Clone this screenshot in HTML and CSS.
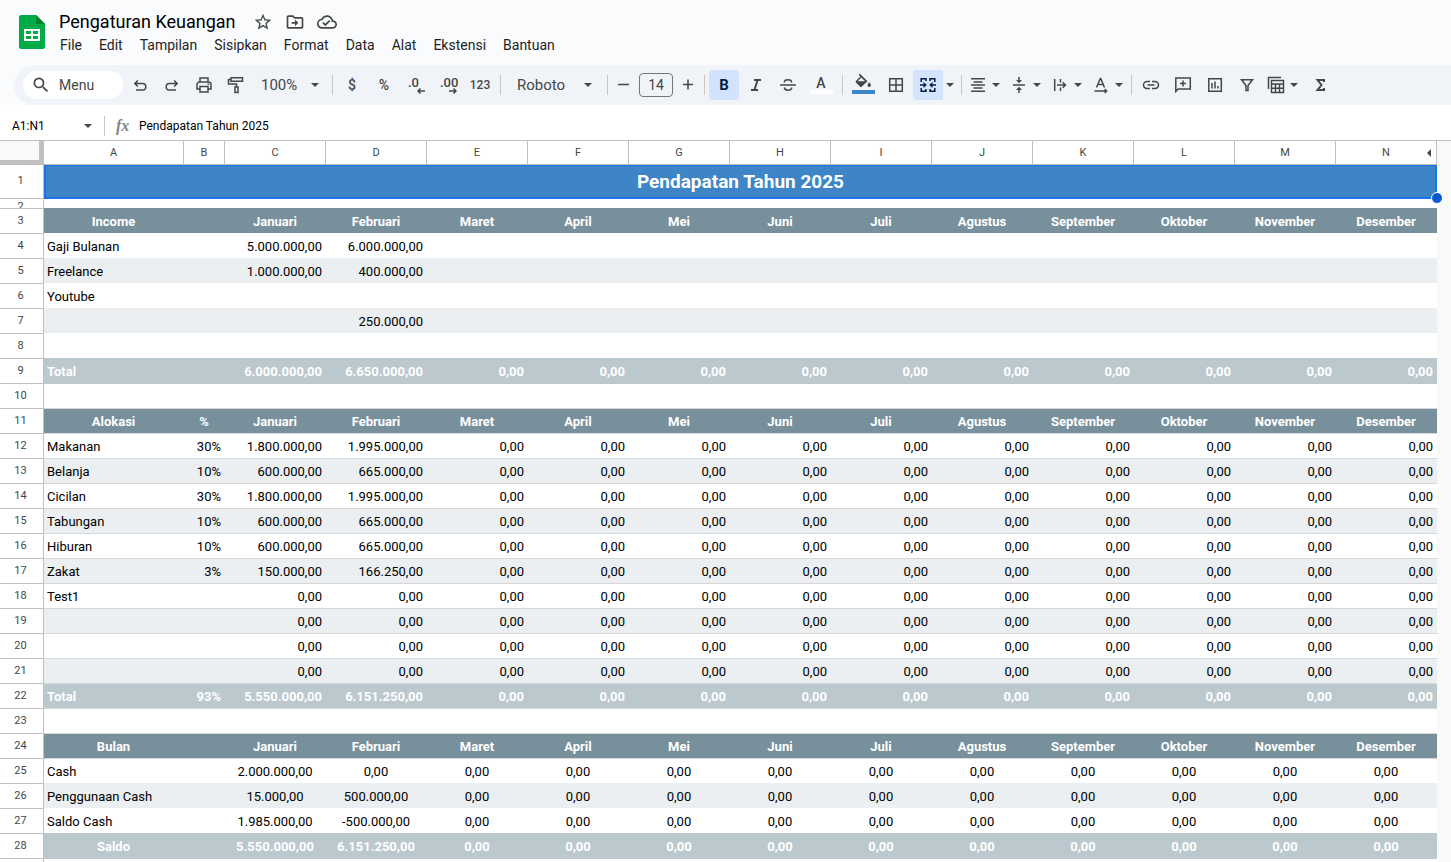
FILE: index.html
```html
<!DOCTYPE html>
<html lang="id">
<head>
<meta charset="utf-8">
<title>Pengaturan Keuangan</title>
<link rel="stylesheet" href="styles.css">
</head>
<body>
<header class="top">
  <svg class="logo" viewBox="0 0 26 34" aria-hidden="true"><path fill="#00ac47" d="M2 0h15l9 9v23a2 2 0 0 1-2 2H2a2 2 0 0 1-2-2V2a2 2 0 0 1 2-2z"/><path fill="#00832d" d="M17 0l9 9h-9z"/><path fill="#fff" d="M5 14h16v12H5zM7 16v3h5v-3zM14 16v3h5v-3zM7 21v3h5v-3zM14 21v3h5v-3z" fill-rule="evenodd"/></svg>
  <div class="head">
    <div class="titlebar">
      <h1 class="title">Pengaturan Keuangan</h1>
      <button class="tico" aria-label="Bintangi"><svg viewBox="0 0 24 24"><path d="M22 9.24l-7.19-.62L12 2 9.19 8.63 2 9.24l5.46 4.73L5.82 21 12 17.27 18.18 21l-1.63-7.03L22 9.24zM12 15.4l-3.76 2.27 1-4.28-3.32-2.88 4.38-.38L12 6.1l1.71 4.04 4.38.38-3.32 2.88 1 4.28L12 15.4z"/></svg></button>
      <button class="tico" aria-label="Pindahkan"><svg viewBox="0 0 24 24"><path d="M20 6h-8l-2-2H4c-1.1 0-2 .9-2 2v12c0 1.100.9 2 2 2h16c1.100 0 2-.9 2-2V8c0-1.100-.9-2-2-2zm0 12H4V6h5.200l2 2H20v10zm-8-1l4-4-4-4v3H8v2h4v3z"/></svg></button>
      <button class="tico" aria-label="Status dokumen"><svg viewBox="0 0 24 24"><path d="M19.350 10.040C18.670 6.590 15.640 4 12 4 9.110 4 6.600 5.640 5.350 8.040 2.340 8.360 0 10.910 0 14c0 3.310 2.690 6 6 6h13c2.760 0 5-2.240 5-5 0-2.640-2.050-4.780-4.650-4.960zM19 18H6c-2.210 0-4-1.790-4-4 0-2.050 1.530-3.760 3.560-3.970l1.070-.11.5-.95C8.080 7.140 9.940 6 12 6c2.620 0 4.880 1.860 5.390 4.430l.3 1.500 1.530.11C20.780 12.140 22 13.450 22 15c0 1.650-1.350 3-3 3zm-9-3.820l-2.090-2.090L6.500 13.500 10 17l6.010-6.010-1.410-1.410z"/></svg></button>
    </div>
    <nav class="menus">
      <button>File</button><button>Edit</button><button>Tampilan</button><button>Sisipkan</button><button>Format</button><button>Data</button><button>Alat</button><button>Ekstensi</button><button>Bantuan</button>
    </nav>
  </div>
</header>

<div class="toolbar" role="toolbar">
  <label class="search"><svg viewBox="0 0 24 24"><path d="M15.500 14h-.79l-.28-.27A6.470 6.470 0 0 0 16 9.500 6.500 6.500 0 1 0 9.500 16c1.610 0 3.090-.59 4.230-1.570l.27.28v.79l5 4.990L20.490 19l-4.990-5zm-6 0C7.010 14 5 11.990 5 9.500S7.010 5 9.500 5 14 7.010 14 9.500 11.990 14 9.500 14z"/></svg><input type="text" placeholder="Menu" aria-label="Menu"></label>
  <button class="tb" aria-label="Urungkan"><svg viewBox="0 0 18 18"><path class="ln" d="M4 7.500h7.500a3.300 3.300 0 0 1 0 6.600H5M6.800 4.500l-3 3 3 3"/></svg></button>
  <button class="tb" aria-label="Ulangi"><svg viewBox="0 0 18 18"><path class="ln" d="M14 7.500H6.500a3.300 3.300 0 0 0 0 6.600H13M11.200 4.500l3 3-3 3"/></svg></button>
  <button class="tb" aria-label="Cetak"><svg viewBox="0 0 18 18"><path class="ln" d="M5 5.500V2h8v3.500M5 13H2V8.500a2.500 2.500 0 0 1 2.500-2.500h9A2.500 2.500 0 0 1 16 8.500V13h-3M5 10.500h8V16H5z"/><path d="M12.500 7.500h1.500v1.500h-1.500z"/></svg></button>
  <button class="tb" aria-label="Format cat"><svg viewBox="0 0 18 18"><path class="ln" d="M4 1.800h11.500v3.500H4zM4 3.500H1.500V8H9.500v3M8 11h3v5.500H8z"/></svg></button>
  <button class="zoom">100%<i class="car"></i></button>
  <i class="sep"></i>
  <button class="tb txt">$</button>
  <button class="tb txt">%</button>
  <button class="tb dec" aria-label="Kurangi desimal"><span>.0</span><svg viewBox="0 0 8 6"><path class="ln" d="M8 3H1.500M3.500.5L1 3l2.500 2.500"/></svg></button>
  <button class="tb dec" aria-label="Tambah desimal"><span>.00</span><svg viewBox="0 0 8 6"><path class="ln" d="M0 3h6.500M4.500.5L7 3 4.500 5.500"/></svg></button>
  <button class="tb txt num">123</button>
  <i class="sep"></i>
  <button class="font">Roboto<i class="car"></i></button>
  <i class="sep"></i>
  <button class="tb step" aria-label="Perkecil"><svg viewBox="0 0 18 18"><path class="ln" d="M4 8.500h11"/></svg></button>
  <input class="size" type="text" value="14" aria-label="Ukuran font">
  <button class="tb step" aria-label="Perbesar"><svg viewBox="0 0 18 18"><path class="ln" d="M4 8.500h10M9 3.500v10"/></svg></button>
  <i class="sep"></i>
  <button class="tb on bold">B</button>
  <button class="tb" aria-label="Miring"><svg viewBox="0 0 18 18"><path class="ln th" d="M7 4h7M4 14h7M10.700 4L7.300 14"/></svg></button>
  <button class="tb" aria-label="Coret"><svg viewBox="0 0 18 18"><path class="ln" d="M1 9h16M12.700 6.500C12.500 4.800 11 3.800 9 3.800S5.300 4.900 5.300 6.500M5.300 11.500c.3 1.700 1.700 2.700 3.700 2.700s3.700-1 3.700-2.700"/></svg></button>
  <button class="tb color"><span>A</span><i class="bar white"></i></button>
  <i class="sep"></i>
  <button class="tb color" aria-label="Warna isian"><svg viewBox="0 0 18 18"><path d="M13.500 9.200L7.200 3 5.800 1.800 4.700 2.900l1.700 1.700L1.900 9.100a1 1 0 0 0 0 1.400l4.300 4.300a1 1 0 0 0 1.400 0l5.900-5.600zM7.300 5.600L11 9.200H3.800zM15.200 10.200s-1.700 1.900-1.700 3a1.700 1.700 0 0 0 3.400 0c0-1.100-1.700-3-1.700-3z"/></svg><i class="bar blue"></i></button>
  <button class="tb" aria-label="Batas"><svg viewBox="0 0 18 18"><path class="ln" d="M2.700 2.700h12.600v12.600H2.700zM9 3v12M3 9h12"/></svg></button>
  <div class="split"><button class="tb on merge" aria-label="Gabungkan sel"><svg viewBox="0 0 18 18"><path class="ln" d="M2.200 6V2.800H7V5M2.200 12v3.200H7V13M15.800 6V2.800H11V5M15.800 12v3.200H11V13M1 9h4M17 9h-4"/><path class="dark" d="M4.500 6L7.800 9l-3.300 3zM13.500 6l-3.300 3 3.300 3z"/></svg></button><button class="drop" aria-label="Opsi gabung"><i class="car"></i></button></div>
  <i class="sep"></i>
  <button class="pair" aria-label="Perataan horizontal"><svg viewBox="0 0 18 18"><path class="ln" d="M2 2.800h14M4.500 5.900h9M2 9h14M4.500 12.100h9M2 15.200h14"/></svg><i class="car"></i></button>
  <button class="pair" aria-label="Perataan vertikal"><svg viewBox="0 0 18 18"><path class="ln" d="M3 9h12M9 1v4M9 17v-4"/><path d="M6 4h6L9 7.200zM6 14h6l-3-3.200z"/></svg><i class="car"></i></button>
  <button class="pair" aria-label="Penggabungan teks"><svg viewBox="0 0 18 18"><path class="ln" d="M3.700 3v12M9.500 3v3.500M9.500 11.500V15M6 9h8.500M11.700 6.200L14.500 9l-2.800 2.800"/></svg><i class="car"></i></button>
  <button class="pair last" aria-label="Rotasi teks"><svg viewBox="0 0 18 18"><path class="ln" d="M4.500 11.500L8.300 2.500h.4l3.800 9M5.800 8.600h5.400M2.500 15H15M12.700 13l2 2-2 2"/></svg><i class="car"></i></button>
  <i class="sep"></i>
  <button class="tb" aria-label="Tautan"><svg viewBox="0 0 18 18"><path class="ln" d="M8 5.500H5a3.500 3.500 0 0 0 0 7h3M10 5.500h3a3.500 3.500 0 0 1 0 7h-3M5.500 9h7"/></svg></button>
  <button class="tb" aria-label="Komentar"><svg viewBox="0 0 18 18"><path class="ln" d="M1.800 15.500V2h14.500v11H4.200zM9 4.500v6M6 7.500h6"/></svg></button>
  <button class="tb" aria-label="Diagram"><svg viewBox="0 0 18 18"><path class="ln" d="M2.800 2.700h12.500v12.600H2.800zM6 7v5.500M9 5.500v7M12 10v2.500"/></svg></button>
  <button class="tb" aria-label="Filter"><svg viewBox="0 0 18 18"><path class="ln" d="M3.500 3.700h11L10 9.500v5H8v-5z"/></svg></button>
  <button class="pair" aria-label="Tampilan tabel"><svg viewBox="0 0 18 18"><path class="ln" d="M1.500 13V1.500H14M4.500 4.500h12v12h-12zM4.500 8h12M4.500 12.200h12M8.500 8v8M12.500 8v8"/></svg><i class="car"></i></button>
  <button class="tb" aria-label="Fungsi"><svg viewBox="0 0 18 18"><path class="ln th" d="M13 6V4H6.500L10.500 9l-4 5H13v-2"/></svg></button>
</div>

<div class="formula">
  <input class="ref" type="text" value="A1:N1" aria-label="Kotak nama"><i class="car"></i><i class="sep"></i><span class="fx">fx</span>
  <input class="fin" type="text" value="Pendapatan Tahun 2025" aria-label="Formula">
</div>

<main class="sheet">
  <table class="grid" id="grid"></table>
</main>
<script src="sheet.js"></script>
</body>
</html>
```
FILE: styles.css
```css
* { box-sizing: border-box; }
body { margin: 0; background: #f9fbfd; font-family: Roboto, sans-serif; color: #1f1f1f; height: 100vh; overflow: hidden; display: flex; flex-direction: column; }
button, input { font: inherit; color: inherit; background: none; border: 0; padding: 0; margin: 0; outline: 0; min-width: 0; }
svg { display: block; fill: #444746; }
.ln { fill: none; stroke: #444746; stroke-width: 1.5; }
.th { stroke-width: 2; }
.dark { fill: #041e49; }

.top { display: flex; height: 65px; padding: 11px 0 0 19px; gap: 14px; flex: none; }
.logo { width: 26px; height: 34px; margin-top: 4px; }
.titlebar { display: flex; align-items: center; height: 22px; }
.title { margin: 0 18px 0 0; font-size: 18px; line-height: 22px; font-weight: 400; color: #000; }
.tico { width: 20px; height: 20px; margin-right: 12px; }
.tico svg { width: 20px; height: 20px; }
.menus { display: flex; gap: 17px; margin-top: 2px; padding-left: 1px; }
.menus button { font-size: 14px; line-height: 20px; }

.toolbar { display: flex; align-items: center; height: 40px; margin: 0 0 0 14px; padding-left: 9px; background: #f0f4f9; border-radius: 20px 0 0 20px; flex: none; color: #444746; }
.search { display: flex; align-items: center; width: 100px; height: 28px; background: #fff; border-radius: 14px; padding-left: 8px; gap: 8px; margin-right: 1px; }
.search svg { width: 20px; height: 20px; flex: none; }
.search input { width: 50px; font-size: 14px; }
.search input::placeholder { color: #444746; opacity: 1; }
.tb { width: 30px; height: 30px; margin: 0 1px; border-radius: 4px; display: flex; align-items: center; justify-content: center; flex: none; }
.tb svg, .pair svg { width: 18px; height: 18px; }
.on { background: #d3e3fd; color: #041e49; }
.on .ln { stroke: #041e49; }
.car { width: 0; height: 0; border: 4px solid transparent; border-top-color: #444746; border-bottom: 0; flex: none; }
.sep { width: 1px; height: 20px; background: #c7c7c7; flex: none; margin: 0 3px 0 4px; }
.zoom { display: flex; align-items: center; justify-content: space-between; width: 58px; margin: 0 9px; font-size: 15px; }
.txt { font-size: 14px; font-weight: 500; }
.num { font-size: 12px; }
.dec { flex-direction: column; align-items: flex-end; justify-content: flex-start; padding: 6px 6px 0 7px; font-size: 13px; line-height: 13px; font-weight: 500; }
.tb.dec svg { width: 8px; height: 6px; margin-top: -1px; }
.dec span { align-self: flex-start; }
.font { display: flex; align-items: center; justify-content: space-between; width: 75px; margin: 0 11px 0 13px; font-size: 15px; }
.size { width: 34px; height: 24px; border: 1px solid #747775; border-radius: 4px; text-align: center; font-size: 14px; margin: 0 3px 0 4px; }
.step { width: 24px; margin: 0; }
.bold { font-size: 15px; font-weight: 700; }
.color { flex-direction: column; justify-content: flex-start; margin: 0 2px; padding-top: 2px; font-size: 14px; font-weight: 500; }
.color span { height: 18px; line-height: 22px; }
.bar { width: 23px; height: 4px; flex: none; }
.white { background: #fff; }
.blue { background: #3d85c6; }
.split { display: flex; align-items: center; }
.merge { border-radius: 4px 0 0 4px; margin-right: 0; }
.drop { width: 14px; height: 30px; display: flex; align-items: center; justify-content: center; }
.pair { display: flex; align-items: center; justify-content: space-between; width: 31px; margin: 0 6px 0 4px; }
.last { margin-right: 4px; }

.formula { display: flex; align-items: center; height: 35px; background: #fff; padding: 6px 0 0 12px; flex: none; font-size: 12px; color: #000; }
.ref { width: 72px; }
.formula .sep { margin: 0 11px 0 12px; }
.fx { font: italic 600 16px/20px "Liberation Serif", serif; color: #80868b; width: 23px; }
.fin { flex: 1; }

.sheet { flex: 1; overflow: hidden; padding-right: 14px; border-top: 1px solid #c0c0c0; background: #f8faf8; }
.grid { width: 100%; table-layout: fixed; border-collapse: separate; border-spacing: 0; background: #fff; font-size: 13px; color: #000; }
.c-num { width: 44px; }
.c-a { width: 140px; }
.c-b { width: 41px; }
td, th { padding: 2px 4px 0 3px; height: 25px; line-height: 15px; white-space: nowrap; overflow: hidden; font-weight: 400; text-align: right; }
.cols th { height: 23px; padding: 0; font-size: 11px; text-align: center; color: #444746; border-right: 1px solid #c0c0c0; background: #fff; position: relative; }
.cols .corner { background: #f8f9fa; border-right: 5px solid #c0c0c0; border-bottom: 4px solid #c0c0c0; }
.hide { position: absolute; right: 5px; top: 8px; border: 4px solid transparent; border-right-color: #444746; border-left: 0; }
.grid .rn { font-size: 11px; text-align: center; padding: 0 2px 2px 0; color: #444746; border-right: 1px solid #c0c0c0; border-top: 1px solid #c0c0c0; background: #fff; }
.title-row .rn { height: 34px; }
.title-row td { height: 34px; position: relative; overflow: visible; background: #3d85c6; color: #fff; font-size: 19px; font-weight: 700; text-align: center; padding: 0; border-top: 1px solid #c0c0c0; }
.sel { position: absolute; inset: 0 0 -1px 0; border: 2px solid #1a73e8; border-top-width: 1px; }
.sel::after { content: ""; position: absolute; right: -8px; bottom: -7px; width: 10px; height: 10px; border-radius: 50%; background: #0b57d0; border: 1px solid #fff; }
.thin td, .grid .thin .rn { height: 10px; line-height: 8px; padding-top: 0; padding-bottom: 0; }
.thin .rn div { height: 9px; line-height: 15px; overflow: hidden; }
.hd td { background: #78909c; color: #fff; font-weight: 700; text-align: center; }
.alt td { background: #ebeff1; }
.tot td { background: #bbc8ce; color: #fff; font-weight: 700; }
.mid td { text-align: center; }
.grid .lab { text-align: left; }
.ruled td { border-top: 1px solid #d5d7d8; padding-top: 1px; }
.tail td { border-top: 1px solid #bbc8ce; padding-top: 1px; }
```
FILE: sheet.js
```js
const months = ["Januari", "Februari", "Maret", "April", "Mei", "Juni", "Juli", "Agustus", "September", "Oktober", "November", "Desember"];
const zeros = n => Array(n).fill("0,00");
const line = (a, b, c, d) => [a, b, c, d, ...zeros(10)];
const sparse = (a, c, d) => [a, "", c, d, ...Array(10).fill("")];
const rows = [
  ["hd", ["Income", "", ...months]],
  ["", sparse("Gaji Bulanan", "5.000.000,00", "6.000.000,00")],
  ["alt", sparse("Freelance", "1.000.000,00", "400.000,00")],
  ["", sparse("Youtube", "", "")],
  ["alt", sparse("", "", "250.000,00")],
  ["", sparse("", "", "")],
  ["tot", line("Total", "", "6.000.000,00", "6.650.000,00")],
  ["tail", sparse("", "", "")],
  ["hd", ["Alokasi", "%", ...months]],
  ["", line("Makanan", "30%", "1.800.000,00", "1.995.000,00")],
  ["alt", line("Belanja", "10%", "600.000,00", "665.000,00")],
  ["", line("Cicilan", "30%", "1.800.000,00", "1.995.000,00")],
  ["alt", line("Tabungan", "10%", "600.000,00", "665.000,00")],
  ["", line("Hiburan", "10%", "600.000,00", "665.000,00")],
  ["alt", line("Zakat", "3%", "150.000,00", "166.250,00")],
  ["", line("Test1", "", "0,00", "0,00")],
  ["alt", line("", "", "0,00", "0,00")],
  ["", line("", "", "0,00", "0,00")],
  ["alt", line("", "", "0,00", "0,00")],
  ["tot", line("Total", "93%", "5.550.000,00", "6.151.250,00")],
  ["", sparse("", "", "")],
  ["hd", ["Bulan", "", ...months]],
  ["mid", line("Cash", "", "2.000.000,00", "0,00")],
  ["mid alt", line("Penggunaan Cash", "", "15.000,00", "500.000,00")],
  ["mid", line("Saldo Cash", "", "1.985.000,00", "-500.000,00")],
  ["mid tot", line("Saldo", "", "5.550.000,00", "6.151.250,00")]
];
let html = '<colgroup><col class="c-num"><col class="c-a"><col class="c-b">' + "<col>".repeat(12) + "</colgroup>";
html += '<tr class="cols"><th class="corner"></th>' + [..."ABCDEFGHIJKLMN"].map(c => `<th>${c}${c === "N" ? '<i class="hide"></i>' : ""}</th>`).join("") + "</tr>";
html += '<tr class="title-row"><th class="rn">1</th><td colspan="14">Pendapatan Tahun 2025<div class="sel"></div></td></tr>';
html += '<tr class="thin"><th class="rn"><div>2</div></th><td colspan="14"></td></tr>';
rows.forEach(([cls, cells], i) => {
  const n = i + 3;
  const centered = cls === "hd" || cls === "mid tot";
  const ruled = n >= 11 && n <= 25 ? " ruled" : "";
  html += `<tr class="${cls}${ruled}"><th class="rn">${n}</th>` + cells.map((c, k) => `<td${k === 0 && !centered ? ' class="lab"' : ""}>${c}</td>`).join("") + "</tr>";
});
html += '<tr class="tail"><th class="rn"></th><td colspan="14"></td></tr>';
document.getElementById("grid").innerHTML = html;
```
